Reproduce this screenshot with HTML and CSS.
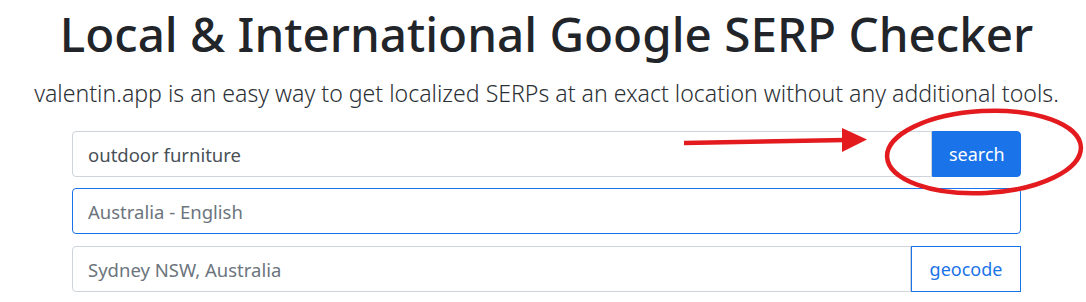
FILE: index.html
```html
<!DOCTYPE html>
<html lang="en">
<head>
  <meta charset="UTF-8">
  <title>Local &amp; International Google SERP Checker</title>
  <link rel="stylesheet" href="styles.css">
</head>
<body>

<div class="page">
  <h1 class="title">Local &amp; International Google SERP Checker</h1>
  <p class="lead">valentin.app is an easy way to get localized SERPs at an exact location without any additional tools.</p>

  <form class="search-form" onsubmit="return false">
    <div class="input-group">
      <input type="text" class="form-control" id="query" value="outdoor furniture">
      <button type="submit" class="btn btn-primary">search</button>
    </div>

    <div class="input-group">
      <input type="text" class="form-control focused" id="locale" placeholder="Australia - English">
    </div>

    <div class="input-group last">
      <input type="text" class="form-control" id="location" placeholder="Sydney NSW, Australia">
      <button type="button" class="btn btn-outline">geocode</button>
    </div>
  </form>

  <!-- red annotation drawn over the screenshot -->
  <svg class="markup" width="1086" height="302" viewBox="0 0 1086 302">
    <line x1="684" y1="143" x2="846" y2="140" stroke="#e31b1f" stroke-width="4.5"/>
    <polygon points="842,128 867,139.5 842,152" fill="#e31b1f"/>
    <ellipse cx="984" cy="152" rx="97" ry="41" fill="none" stroke="#e31b1f" stroke-width="4.5" transform="rotate(-3 984 152)"/>
  </svg>
</div>

</body>
</html>
```

FILE: styles.css
```css
* { box-sizing: border-box; }
body { margin: 0; padding-left: 7px; background: #fff; color: #212529; font-family: "Noto Sans", "Open Sans", Arial, sans-serif; }
.page { position: relative; width: 1086px; height: 302px; margin-left: -7px; padding-left: 7px; overflow: hidden; }
.title { margin: 0; padding-top: 5px; font-size: 47.6px; font-weight: 500; line-height: 58px; text-align: center; color: #212529; }
.lead { margin: 14px 0 0; font-size: 23.1px; font-weight: 300; line-height: 32px; text-align: center; color: #2b3035; }
.search-form { width: 949px; margin: 22px auto 0; display: flex; flex-direction: column; gap: 11px; }
.input-group { display: flex; height: 46px; }
.input-group.last { margin-top: 1px; }
.form-control { flex: 1; min-width: 0; height: 100%; padding: 0 15px; border: 1px solid #ced4da; border-radius: 4px; font: inherit; font-size: 18.5px; color: #495057; background: #fff; outline: none; }
.form-control::placeholder { color: #6c757d; }
.form-control.focused { border-color: #1a73e8; }
.input-group .form-control:not(:last-child) { border-top-right-radius: 0; border-bottom-right-radius: 0; }
.btn { height: 100%; padding: 0 16px; border: 1px solid transparent; font: inherit; font-size: 18px; cursor: pointer; }
.btn-primary { width: 89px; background: #1a73e8; border-color: #1a73e8; color: #fff; border-radius: 0 4px 4px 0; }
.btn-outline { width: 110px; background: #fff; border-color: #1a73e8; color: #1a73e8; border-radius: 0; }
.markup { position: absolute; left: 0; top: 0; pointer-events: none; }
```
